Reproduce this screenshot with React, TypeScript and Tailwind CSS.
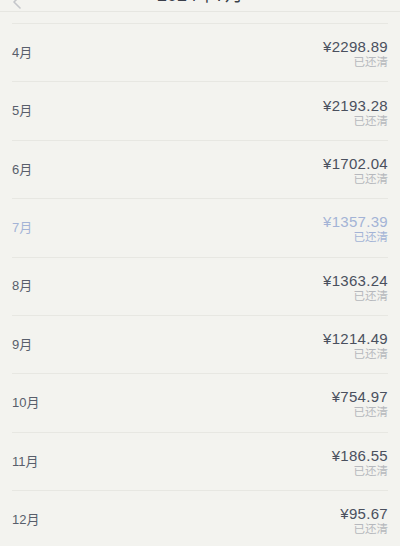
const bills = [
  { month: '4月', amount: '2298.89' },
  { month: '5月', amount: '2193.28' },
  { month: '6月', amount: '1702.04' },
  { month: '7月', amount: '1357.39', current: true },
  { month: '8月', amount: '1363.24' },
  { month: '9月', amount: '1214.49' },
  { month: '10月', amount: '754.97' },
  { month: '11月', amount: '186.55' },
  { month: '12月', amount: '95.67' },
];

export default function App() {
  return (
    <div
      className="h-[546px] w-[400px] overflow-hidden bg-[#f3f3ef]"
      style={{ fontFamily: '"Liberation Sans", "Noto Sans CJK SC", sans-serif' }}
    >
      <header className="relative -mt-[20px] flex h-[32px] items-center justify-center border-b border-[#e6e6e1]">
        <svg className="absolute left-[12px] top-[15px] h-[14px] w-[10px]" viewBox="0 0 10 14" fill="none">
          <path d="M8 1 2 7l6 6" stroke="#c4c6ca" strokeWidth="1.6" strokeLinecap="round" strokeLinejoin="round" />
        </svg>
        <h1 className="text-[18px] text-[#3a3f4a]">2024年7月</h1>
      </header>

      <ul className="mt-[11px] px-3">
        {bills.map((bill) => (
          <li
            key={bill.month}
            className="flex h-[58.375px] items-center justify-between border-t border-[#e7e7e2]"
          >
            <span className={`text-[13px] ${bill.current ? 'text-[#a3b3d6]' : 'text-[#585e6b]'}`}>{bill.month}</span>
            <div className="flex flex-col items-end pt-[3px]">
              <span
                className={`text-[15px] leading-[17px] tracking-[0.3px] ${bill.current ? 'text-[#a3b3d6]' : 'text-[#4a505e]'}`}
              >
                ¥{bill.amount}
              </span>
              <span className={`text-[11.5px] leading-[15px] ${bill.current ? 'text-[#a3b3d6]' : 'text-[#b6b8bd]'}`}>已还清</span>
            </div>
          </li>
        ))}
      </ul>
    </div>
  );
}
